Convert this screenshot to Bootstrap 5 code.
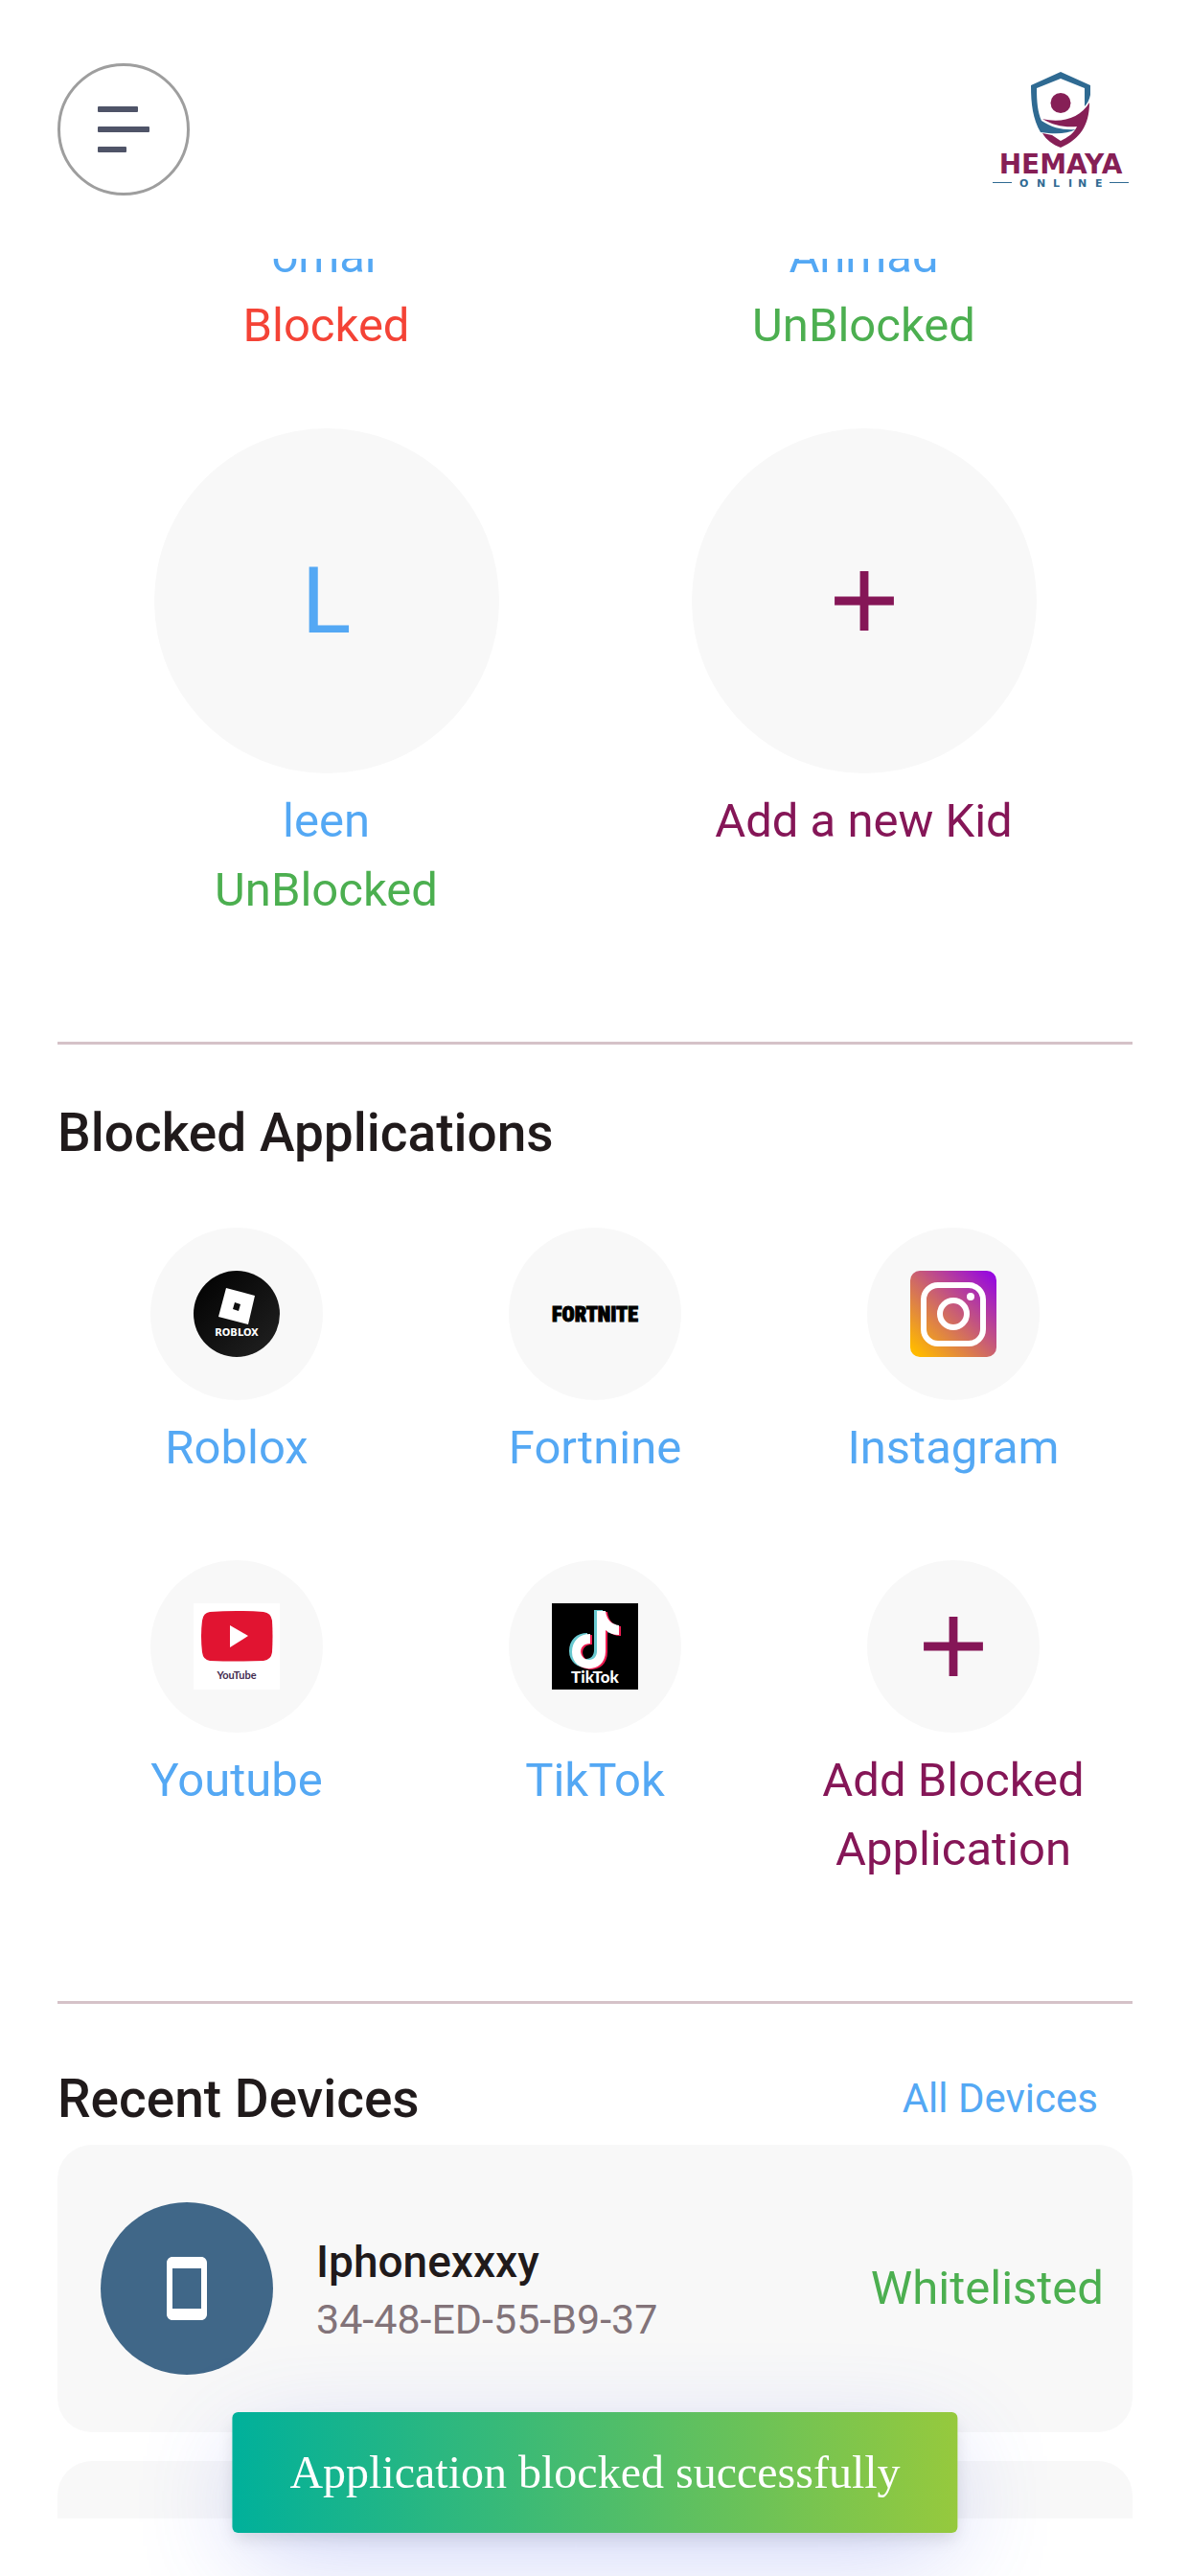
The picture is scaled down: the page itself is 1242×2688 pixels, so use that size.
<!DOCTYPE html>
<html lang="en">
<head>
<meta charset="utf-8">
<meta name="viewport" content="width=device-width, initial-scale=1">
<title>Hemaya Online</title>
<link href="https://cdn.jsdelivr.net/npm/bootstrap@5.3.0/dist/css/bootstrap.min.css" rel="stylesheet">
<script src="https://cdn.jsdelivr.net/npm/bootstrap@5.3.0/dist/js/bootstrap.bundle.min.js" defer></script>
<style>
  body { font-family: Roboto, "Liberation Sans", sans-serif; font-size: 49px; line-height: 72px; color: #201a1b; background: #fff; }
  a { text-decoration: none; }
  .gutter { padding-left: 60px; padding-right: 60px; }
  .topbar { padding-top: 66px; padding-bottom: 66px; }
  .menu-btn { width: 138px; height: 138px; border: 3px solid #9e9e9e; }
  .brand-logo { width: 144px; height: 126px; }
  .scroller { min-height: 0; margin-bottom: 60px; }
  /* the list is scrolled part of the way under the top bar */
  .scrolled { margin-top: -38px; }
  .c-sky { color: #54a8f4; }
  .c-plum { color: #851657; }
  .c-ok { color: #4caf50; }
  .c-stop { color: #f44336; }
  .c-soft { color: #827379; }
  .kid-list { row-gap: 71px; }
  .app-list { row-gap: 81px; margin-top: 63px; }
  .tile { gap: 14px; }
  .disc { background: #f8f8f8; }
  .disc-lg { width: 360px; height: 360px; font-size: 96px; }
  .disc-sm { width: 180px; height: 180px; }
  .app-icon { width: 90px; height: 90px; }
  .plus-icon { width: 106px; height: 106px; }
  .rule { border: 0; height: 3px; background: #d5c2c8; opacity: 1; margin: 122px 0 56px; }
  .section-title { font-size: 55px; line-height: 72px; font-weight: 500; }
  .devices-head { min-height: 86px; margin-bottom: 5px; }
  .all-link { font-size: 42px; padding-right: 36px; }
  .device-list { gap: 30px; }
  .device { height: 300px; border-radius: 36px; background: #f8f8f8; padding: 0 30px 0 45px; gap: 45px; }
  .device-disc { width: 180px; height: 180px; background: #406788; }
  .device-text { padding-top: 4px; line-height: 60px; }
  .device-name { font-size: 46px; font-weight: 500; }
  .device-mac { font-size: 43px; }
  .notice { bottom: 45px; padding: 36px 60px; border-radius: 6px; font: 48px/54px "Liberation Serif", serif; color: #fff;
    background: linear-gradient(to right, #00b09b, #96c93d);
    box-shadow: 0 9px 18px -3px rgba(0,0,0,.12), 0 30px 108px -12px rgba(77,96,232,.3); }
</style>
</head>
<body>
<div class="d-flex flex-column vh-100 overflow-hidden">
  <header class="topbar gutter d-flex justify-content-between align-items-center flex-shrink-0">
    <button type="button" class="menu-btn btn rounded-circle p-0 d-flex align-items-center justify-content-center" aria-label="Menu">
      <svg width="54" height="48" viewBox="0 0 54 48" fill="#4f5468"><rect width="42" height="6" rx="1"/><rect y="21" width="54" height="6" rx="1"/><rect y="42" width="30" height="6" rx="1"/></svg>
    </button>
    <a href="#" aria-label="Hemaya Online">
      <svg class="brand-logo d-block overflow-visible" viewBox="0 0 144 126">
        <path fill="#2f6a92" d="M69 3 100 17v10c-1 5-3 9-6 12V20L69 10 44 20c0 14 1 25 5 34 12 8 24 10 36 9-10 5-22 5-37 3C40 52 38 37 38 17Z"/>
        <circle cx="69" cy="35.500" r="10.500" fill="#861f56"/>
        <path fill="#861f56" d="M50 52c20 5 40-1 49-17 0 24-10 38-30 47-8-3-15-8-19-15l10 2 9 6c8-4 14-8 17-15-13 1-25-1-36-8Z"/>
        <text x="69" y="109" text-anchor="middle" font-family="DejaVu Sans" font-weight="bold" font-size="28" fill="#861f56">HEMAYA</text>
        <text x="26 44 61 77 87 105" y="123" font-family="DejaVu Sans" font-weight="bold" font-size="11" fill="#2f6a92">ONLINE</text>
        <path d="M-2 118.500h20M120 118.500h20" stroke="#2f6a92"/>
      </svg>
    </a>
  </header>

  <main class="scroller gutter flex-grow-1 overflow-hidden">
    <div class="scrolled">
      <section class="kid-list row g-0 text-center" aria-label="Kids">
        <div class="col-6 d-flex flex-column"><a href="#" class="c-sky">omar</a><span class="c-stop">Blocked</span></div>
        <div class="col-6 d-flex flex-column"><a href="#" class="c-sky">Ahmad</a><span class="c-ok">UnBlocked</span></div>
        <div class="col-6"><div class="tile d-flex flex-column align-items-center">
          <a href="#" class="disc disc-lg c-sky rounded-circle d-flex align-items-center justify-content-center">L</a>
          <div class="d-flex flex-column"><a href="#" class="c-sky">leen</a><span class="c-ok">UnBlocked</span></div>
        </div></div>
        <div class="col-6"><a href="#" class="tile c-plum d-flex flex-column align-items-center">
          <span class="disc disc-lg rounded-circle d-flex align-items-center justify-content-center"><svg class="plus-icon" viewBox="0 0 24 24" fill="currentColor"><path d="M19 13h-6v6h-2v-6H5v-2h6V5h2v6h6z"/></svg></span>
          <span>Add a new Kid</span>
        </a></div>
      </section>

      <hr class="rule">

      <section>
        <h2 class="section-title m-0">Blocked Applications</h2>
        <div class="app-list row g-0 text-center">
          <div class="col-4"><a href="#" class="tile c-sky d-flex flex-column align-items-center">
            <span class="disc disc-sm rounded-circle d-flex align-items-center justify-content-center">
              <svg class="app-icon" viewBox="0 0 90 90">
                <defs><linearGradient id="rb" x2="1" y2="1"><stop stop-color="#000"/><stop offset="1" stop-color="#222"/></linearGradient></defs>
                <circle cx="45" cy="45" r="45" fill="url(#rb)"/>
                <path fill="#fff" fill-rule="evenodd" d="M34 18 64 26 57 56 26 48ZM43 33 41 40 47 42 49 35Z"/>
                <text x="45" y="68" text-anchor="middle" font-family="DejaVu Sans" font-weight="bold" font-size="10" fill="#fff">ROBLOX</text>
              </svg>
            </span><span>Roblox</span></a></div>
          <div class="col-4"><a href="#" class="tile c-sky d-flex flex-column align-items-center">
            <span class="disc disc-sm rounded-circle d-flex align-items-center justify-content-center">
              <svg class="app-icon overflow-visible" viewBox="0 0 90 90">
                <text x="45" y="53" text-anchor="middle" font-family="Roboto Condensed, Roboto" font-weight="900" font-size="22" stroke="#000">FORTNITE</text>
              </svg>
            </span><span>Fortnine</span></a></div>
          <div class="col-4"><a href="#" class="tile c-sky d-flex flex-column align-items-center">
            <span class="disc disc-sm rounded-circle d-flex align-items-center justify-content-center">
              <svg class="app-icon" viewBox="0 0 90 90">
                <defs><linearGradient id="ig" x1="0" y1="1" x2="1" y2="0"><stop offset=".06" stop-color="#ffb900"/><stop offset="1" stop-color="#9100eb"/></linearGradient></defs>
                <rect width="90" height="90" rx="10" fill="url(#ig)"/>
                <g fill="none" stroke="#fff" stroke-width="6"><rect x="14" y="15" width="62" height="61" rx="15"/><circle cx="45" cy="45" r="14"/></g>
                <circle cx="63" cy="27" r="4" fill="#fff"/>
              </svg>
            </span><span>Instagram</span></a></div>
          <div class="col-4"><a href="#" class="tile c-sky d-flex flex-column align-items-center">
            <span class="disc disc-sm rounded-circle d-flex align-items-center justify-content-center">
              <svg class="app-icon" viewBox="0 0 90 90">
                <rect width="90" height="90" fill="#fff"/>
                <path fill="#e11431" d="M17 9Q45 7 73 9 81 10 82 18 83 34 82 51 81 59 73 60 45 61 17 60 10 59 9 51 7 34 9 18 10 10 17 9Z"/>
                <path fill="#fff" d="M38 23v23l19-12z"/>
                <text x="45" y="79" text-anchor="middle" font-family="Lato" font-weight="bold" font-size="11" fill="#432c50">YouTube</text>
              </svg>
            </span><span>Youtube</span></a></div>
          <div class="col-4"><a href="#" class="tile c-sky d-flex flex-column align-items-center">
            <span class="disc disc-sm rounded-circle d-flex align-items-center justify-content-center">
              <svg class="app-icon" viewBox="0 0 90 90">
                <defs><path id="note" d="M47 8h9c1 9 6 14 14 15v10c-6 0-10-2-14-5v22c0 25-35 23-35 1 0-12 8-19 19-19v10c-14 0-12 17-1 17 5 0 8-4 8-9Z"/></defs>
                <rect width="90" height="90"/>
                <use href="#note" x="-3" y="-1" fill="#69c9d0"/><use href="#note" x="2" y="1" fill="#ee1d52"/><use href="#note" fill="#fff"/>
                <text x="45" y="83" text-anchor="middle" font-family="Lato" font-weight="900" font-size="17" fill="#fff">TikTok</text>
              </svg>
            </span><span>TikTok</span></a></div>
          <div class="col-4"><a href="#" class="tile c-plum d-flex flex-column align-items-center">
            <span class="disc disc-sm rounded-circle d-flex align-items-center justify-content-center"><svg class="plus-icon" viewBox="0 0 24 24" fill="currentColor"><path d="M19 13h-6v6h-2v-6H5v-2h6V5h2v6h6z"/></svg></span>
            <span>Add Blocked Application</span></a></div>
        </div>
      </section>

      <hr class="rule">

      <section>
        <div class="devices-head d-flex justify-content-between align-items-center">
          <h2 class="section-title m-0">Recent Devices</h2>
          <a href="#" class="all-link c-sky">All Devices</a>
        </div>
        <div class="device-list d-flex flex-column">
          <article class="device d-flex align-items-center">
            <span class="device-disc rounded-circle d-flex align-items-center justify-content-center flex-shrink-0"><svg width="72" height="72" viewBox="0 0 24 24" fill="#fff"><path d="M17 1H7c-1.100 0-2 .9-2 2v18c0 1.100.9 2 2 2h10c1.100 0 2-.9 2-2V3c0-1.100-.9-2-2-2zM17 19H7V5h10z"/></svg></span>
            <div class="device-text flex-grow-1"><div class="device-name">Iphonexxxy</div><div class="device-mac c-soft">34-48-ED-55-B9-37</div></div>
            <span class="c-ok">Whitelisted</span>
          </article>
          <article class="device"></article>
        </div>
      </section>
    </div>
  </main>
</div>
<div class="notice position-fixed start-50 translate-middle-x text-nowrap" role="status">Application blocked successfully</div>
</body>
</html>
